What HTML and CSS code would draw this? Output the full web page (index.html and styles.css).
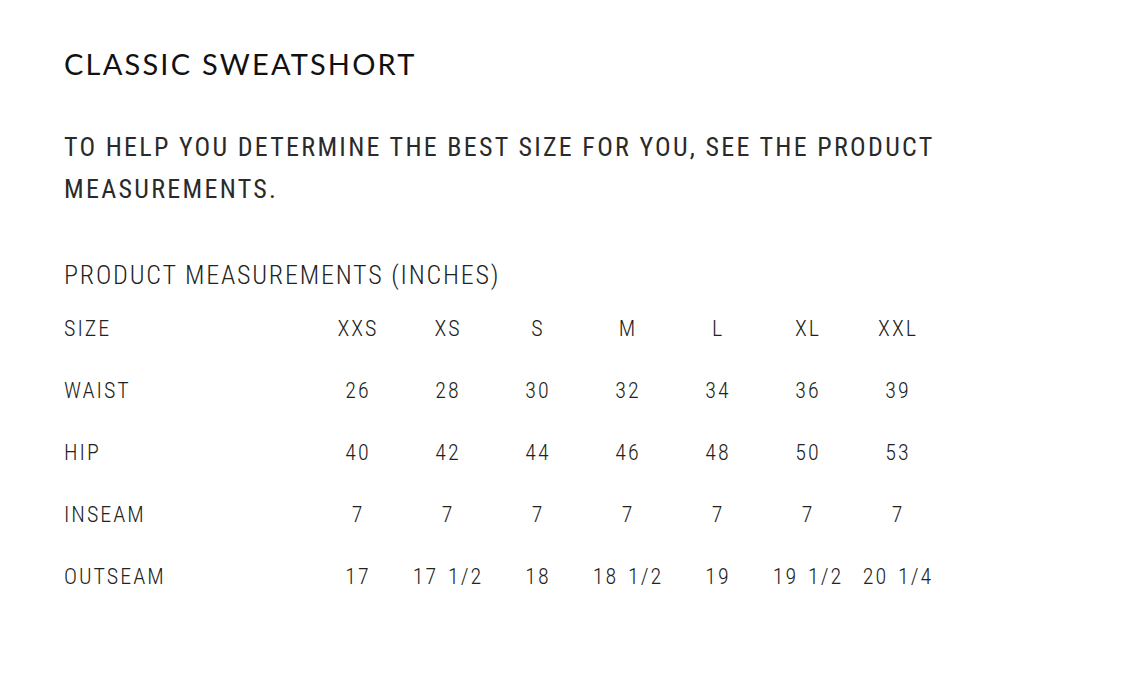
FILE: index.html
```html
<!DOCTYPE html>
<html>
<head>
<meta charset="utf-8">
<link rel="stylesheet" href="styles.css">
</head>
<body>
<main class="page">
  <h1 class="title">CLASSIC SWEATSHORT</h1>
  <p class="intro">TO HELP YOU DETERMINE THE BEST SIZE FOR YOU, SEE THE PRODUCT MEASUREMENTS.</p>
  <h2 class="subtitle">PRODUCT MEASUREMENTS (INCHES)</h2>
  <div class="table">
    <div class="row">
      <span class="label">SIZE</span>
      <span class="cell">XXS</span><span class="cell">XS</span><span class="cell">S</span><span class="cell">M</span><span class="cell">L</span><span class="cell">XL</span><span class="cell">XXL</span>
    </div>
    <div class="row">
      <span class="label">WAIST</span>
      <span class="cell">26</span><span class="cell">28</span><span class="cell">30</span><span class="cell">32</span><span class="cell">34</span><span class="cell">36</span><span class="cell">39</span>
    </div>
    <div class="row">
      <span class="label">HIP</span>
      <span class="cell">40</span><span class="cell">42</span><span class="cell">44</span><span class="cell">46</span><span class="cell">48</span><span class="cell">50</span><span class="cell">53</span>
    </div>
    <div class="row">
      <span class="label">INSEAM</span>
      <span class="cell">7</span><span class="cell">7</span><span class="cell">7</span><span class="cell">7</span><span class="cell">7</span><span class="cell">7</span><span class="cell">7</span>
    </div>
    <div class="row">
      <span class="label">OUTSEAM</span>
      <span class="cell">17</span><span class="cell">17 1/2</span><span class="cell">18</span><span class="cell">18 1/2</span><span class="cell">19</span><span class="cell">19 1/2</span><span class="cell">20 1/4</span>
    </div>
  </div>
</main>
</body>
</html>
```
FILE: styles.css
```css
html, body {
  margin: 0;
  padding: 0;
  background: #fff;
}
body {
  color: #222;
  font-family: "Roboto Condensed", "Roboto", "Liberation Sans", sans-serif;
}
.page {
  padding: 44px 64px 0 64px;
}
.title {
  margin: 0;
  font-family: "Lato", "Open Sans", sans-serif;
  font-weight: 400;
  font-size: 29px;
  line-height: 40px;
  letter-spacing: 2.2px;
  color: #111;
}
.intro {
  margin: 42px 0 0 0;
  max-width: 900px;
  font-size: 26px;
  line-height: 42px;
  letter-spacing: 2.3px;
  color: #2a2a2a;
}
.subtitle {
  margin: 45px 0 0 0;
  font-weight: 300;
  font-size: 26px;
  line-height: 40px;
  letter-spacing: 1.8px;
}
.table {
  margin-top: 21px;
}
.row {
  display: grid;
  grid-template-columns: 249px repeat(7, 90px);
  height: 62px;
  align-items: start;
  font-size: 22px;
  font-weight: 300;
  line-height: 26px;
  letter-spacing: 2px;
}
.label {
  text-align: left;
}
.cell {
  text-align: center;
  white-space: nowrap;
  word-spacing: 3px;
}
```
